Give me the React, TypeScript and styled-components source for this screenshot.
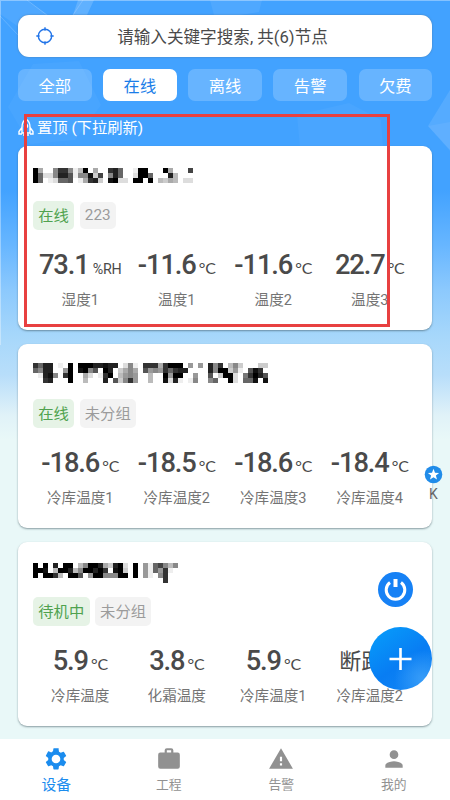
import React from "react";
import styled, { createGlobalStyle } from "styled-components";

const GlobalStyle = createGlobalStyle`
  * { box-sizing: border-box; }
  body {
    margin: 0;
    font-family: Roboto, "Noto Sans CJK SC", sans-serif;
    color: #4a4a4a;
  }
`;

const Screen = styled.div`
  position: relative;
  display: flex;
  flex-direction: column;
  width: 450px;
  height: 800px;
  overflow: hidden;
  background: linear-gradient(#42a2ff 0, #42a2ff 190px, #67b6ff 245px, #8cc9fd 290px, #a6d7fb 335px, #b8defa 375px, #e0f2f8 415px, #e9f8f8 440px, #e9f8f8 100%);
`;

const Backdrop = styled.svg`
  position: absolute;
  left: 0;
  top: 0;
`;

const Content = styled.main`
  position: relative;
  flex: 1;
  min-height: 0;
  padding: 15px 18px 0;
  display: flex;
  flex-direction: column;
`;

const SearchBar = styled.div`
  flex: none;
  height: 42px;
  display: grid;
  grid-template-columns: 52px 1fr 57px;
  align-items: center;
  background: #fff;
  border-radius: 11px;
  box-shadow: 0 0 2px #4d7ca8;
  font-size: 16.6px;
  line-height: 24px;
  text-align: center;
  svg { margin-left: 17.5px; margin-top: -1px; }
  span { padding-top: 4px; white-space: nowrap; }
`;

const Filters = styled.div`
  flex: none;
  display: flex;
  gap: 11.6px;
  margin-top: 12px;
`;

const Chip = styled.button<{ $active?: boolean }>`
  flex: 1;
  height: 32px;
  padding: 4px 0 0;
  border: 0;
  border-radius: 7px;
  background: ${(p) => (p.$active ? "#fff" : "rgba(255,255,255,.2)")};
  color: ${(p) => (p.$active ? "#1a7de8" : "#fff")};
  font: 16.3px/24px Roboto, "Noto Sans CJK SC", sans-serif;
`;

const Pinned = styled.div`
  flex: none;
  height: 45px;
  display: flex;
  align-items: center;
  gap: 3px;
  padding-top: 8px;
  color: #fff;
  font-size: 15.3px;
  line-height: 22px;
`;

const Cards = styled.div`
  display: grid;
  gap: 14px;
`;

const Card = styled.section`
  height: 184px;
  display: flex;
  flex-direction: column;
  padding: 17px 14px 0 14px;
  background: #fff;
  border-radius: 9px;
  box-shadow: 0 1px 2px rgba(55, 80, 90, 0.55);
`;

const Mosaic = styled.svg`
  flex: none;
  display: block;
  margin-left: 1px;
`;

const Tags = styled.div<{ $top: number }>`
  display: flex;
  gap: 5.3px;
  margin: ${(p) => p.$top}px 0 0 1px;
`;

const Tag = styled.span<{ $green?: boolean; $latin?: boolean }>`
  height: ${(p) => (p.$latin ? 27 : 29)}px;
  margin-top: ${(p) => (p.$latin ? 1 : 0)}px;
  padding: ${(p) => (p.$latin ? 2 : 4)}px 5.3px 0;
  border-radius: 5px;
  font-size: 15.3px;
  line-height: 23px;
  background: ${(p) => (p.$green ? "#e6f3e6" : "#f3f3f3")};
  color: ${(p) => (p.$green ? "#4fa24e" : "#9b9b9b")};
`;

const Readings = styled.div`
  display: grid;
  grid-template-columns: repeat(4, 1fr);
  margin-top: 17px;
`;

const Reading = styled.div`
  display: flex;
  flex-direction: column;
  align-items: center;
`;

const Value = styled.div`
  height: 36px;
  display: flex;
  align-items: baseline;
  gap: 3px;
  white-space: nowrap;
  line-height: 36px;
`;

const Amount = styled.b`
  font-size: 27.3px;
  font-weight: 500;
  letter-spacing: -1.1px;
`;

const Unit = styled.span<{ $humidity?: boolean }>`
  font-family: ${(p) => (p.$humidity ? "Roboto" : "Lato")}, sans-serif;
  font-size: ${(p) => (p.$humidity ? 14.3 : 16)}px;
  font-weight: 400;
  margin-left: ${(p) => (p.$humidity ? 1 : 0)}px;
  letter-spacing: -0.2px;
`;

const Fault = styled.span`
  padding: 1px 17px 0 0;
  font-size: 22px;
`;

const Label = styled.div`
  margin-top: 6px;
  font-size: 14.6px;
  line-height: 22px;
  color: #747474;
  white-space: nowrap;
`;

const Navigation = styled.nav`
  position: relative;
  flex: none;
  height: 61px;
  display: grid;
  grid-template-columns: repeat(4, 1fr);
  background: #fff;
`;

const NavItem = styled.div<{ $active?: boolean }>`
  display: flex;
  flex-direction: column;
  align-items: center;
  padding-top: 7px;
  color: ${(p) => (p.$active ? "#1b8cee" : "#919191")};
  font-size: ${(p) => (p.$active ? 14.8 : 12.8)}px;
  line-height: 24px;
  svg { display: block; flex: none; }
  span { margin-top: 1px; }
`;

const Highlight = styled.div`
  position: absolute;
  left: 24px;
  top: 114px;
  width: 366px;
  height: 213px;
  border: 3px solid #e84040;
`;

const IndexMark = styled.div`
  position: absolute;
  left: 424px;
  top: 465px;
  width: 19px;
  display: flex;
  flex-direction: column;
  align-items: center;
  font-size: 14px;
  line-height: 20px;
  color: #666;
`;

const PowerButton = styled.div`
  position: absolute;
  left: 378px;
  top: 572px;
  width: 35px;
  height: 35px;
  border-radius: 50%;
  background: #1681f5;
  svg { display: block; }
`;

const AddButton = styled.div`
  position: absolute;
  left: 369px;
  top: 627px;
  width: 63px;
  height: 63px;
  border-radius: 50%;
  background: radial-gradient(circle at 85% 82%, #379cf8 0, rgba(34,143,247,0) 38%), linear-gradient(145deg, #0799fa 10%, #087df3 55%, #1587f5);
  svg { display: block; }
`;

type Device = {
  mosaic: string[];
  mosaicTop: number;
  mosaicHeight: number;
  tagsTop: number;
  status: string;
  group: string;
  readings: [string, string, string][];
};

const devices: Device[] = [
  {
    mosaic: [
      "0aff8338eb0faff326ffe00fff0afff4",
      "06dd8225e881c4f826ffd006fff2bfff",
      "06fed665fea32cf10ddf00f0fbcabfdd",
    ],
    mosaicTop: 5,
    mosaicHeight: 25,
    tagsTop: 13,
    status: "在线",
    group: "223",
    readings: [["73.1", "%RH", "湿度1"], ["-11.6", "°C", "温度1"], ["-11.6", "°C", "温度2"], ["22.7", "°C", "温度3"]],
  },
  {
    mosaic: [
      "3622fef0f00022122fd8ef333a3000f9f9f283fb8cfffcc",
      "6822ff90f1085f02fca8af598936322ffff2800c9ef513f",
      "fe218f30ffadfe30fb989ffbff0900ff9ff5fc00df73025",
      "ff32fff0ffbfff2f5c839ffbff1d2efe8ff86ff0df661f1",
    ],
    mosaicTop: 2,
    mosaicHeight: 30,
    tagsTop: 8,
    status: "在线",
    group: "未分组",
    readings: [["-18.6", "°C", "冷库温度1"], ["-18.5", "°C", "冷库温度2"], ["-18.6", "°C", "冷库温度3"], ["-18.4", "°C", "冷库温度4"]],
  },
  {
    mosaic: [
      "0f0f2f00fb8002ac20df0f9e648b8",
      "001fb002b800203f10cf0f9e693ef",
      "0f003bf005f90088800f0f9ef83ff",
      "ffffffffffffffffffffffffff3ff",
    ],
    mosaicTop: 4,
    mosaicHeight: 30,
    tagsTop: 8,
    status: "待机中",
    group: "未分组",
    readings: [["5.9", "°C", "冷库温度"], ["3.8", "°C", "化霜温度"], ["5.9", "°C", "冷库温度1"], ["断路", "", "冷库温度2"]],
  },
];

function PixelName({ rows, top, height }: { rows: string[]; top: number; height: number }) {
  return (
    <Mosaic width={235} height={height} shapeRendering="crispEdges">
      {rows.flatMap((row, y) =>
        [...row].map((tone, x) =>
          tone === "f" ? null : (
            <rect key={`${x}-${y}`} x={x * 5} y={top + y * 5} width="5" height="5" fill={`#${tone.repeat(3)}`} />
          ),
        ),
      )}
    </Mosaic>
  );
}

const navItems = [
  {
    name: "设备",
    d: "M19.14 12.94c.04-.3.06-.61.06-.94s-.02-.64-.07-.94l2.03-1.58a.49.49 0 0 0 .12-.61l-1.92-3.32a.49.49 0 0 0-.59-.22l-2.39.96a7 7 0 0 0-1.62-.94l-.36-2.54A.48.48 0 0 0 13.92 2h-3.84a.48.48 0 0 0-.47.41l-.36 2.54c-.59.24-1.13.57-1.62.94l-2.39-.96a.49.49 0 0 0-.59.22L2.74 8.87a.48.48 0 0 0 .12.61l2.03 1.58a6 6 0 0 0-.02 1.88l-2.03 1.58a.49.49 0 0 0-.12.61l1.92 3.32c.12.22.37.29.59.22l2.39-.96c.5.38 1.03.7 1.62.94l.36 2.54c.05.24.24.41.48.41h3.84c.24 0 .44-.17.47-.41l.36-2.54a7 7 0 0 0 1.62-.94l2.39.96c.22.08.47 0 .59-.22l1.92-3.32a.48.48 0 0 0-.12-.61zM12 16a4 4 0 1 1 0-8 4 4 0 0 1 0 8z",
  },
  { name: "工程", d: "M20 6h-4V4a2 2 0 0 0-2-2h-4a2 2 0 0 0-2 2v2H4a2 2 0 0 0-2 2v11a2 2 0 0 0 2 2h16a2 2 0 0 0 2-2V8a2 2 0 0 0-2-2zm-6 0h-4V4h4z" },
  { name: "告警", d: "M1 21h22L12 2zm12-3h-2v-2h2zm0-4h-2v-4h2z" },
  { name: "我的", d: "M12 12a4 4 0 1 0 0-8 4 4 0 0 0 0 8zm0 2c-2.67 0-8 1.34-8 4v2h16v-2c0-2.66-5.33-4-8-4z" },
];

export default function App() {
  return (
    <Screen>
      <GlobalStyle />
      <Backdrop width="450" height="345" fill="#fff">
        <path d="M0 0h27l24 17-19 19L0 14z" opacity=".07" />
        <path d="M0 16l18 19M27 0l25 19M73 15L83 0" stroke="#fff" fill="none" opacity=".18" />
        <path d="M78 0h16l-7 15H73z" opacity=".16" />
        <path d="M210 0h52l-3 12-44 7z" opacity=".07" />
        <path d="M8 107l25-43 46-3 22 44-26 35-45 4z" opacity=".035" />
        <path d="M297 115l52-12 32 17 2 28h-83z" opacity=".04" />
        <path d="M428 126l22-36v60z" opacity=".1" />
        <path d="M428 126l22-4v29z" opacity=".06" />
        <path d="M0 0h1v345H0zM0 0h450v1H0z" opacity=".35" />
      </Backdrop>
      <Content>
        <SearchBar>
          <svg width="18" height="18" fill="none" stroke="#2375e8" strokeWidth="1.4">
            <circle cx="9" cy="9" r="6.7" />
            <path d="M9 .3v3.4M9 14.3v3.4M.3 9h3.4M14.3 9h3.4" />
          </svg>
          <span>请输入关键字搜索, 共(6)节点</span>
        </SearchBar>
        <Filters>
          {["全部", "在线", "离线", "告警", "欠费"].map((name) => (
            <Chip key={name} $active={name === "在线"}>{name}</Chip>
          ))}
        </Filters>
        <Pinned>
          <svg width="16" height="20" viewBox="0 0 16 20" fill="none" stroke="#fff" strokeWidth="1.4">
            <path d="M8 1C5 3 4 6 4 9v6h8V9c0-3-1-6-4-8zM4 9.5l-3 4V16h3M12 9.5l3 4V16h-3M6 16v2M10 16v2M8 16v3.5" />
            <circle cx="8" cy="8" r="1.6" />
          </svg>
          置顶 (下拉刷新)
        </Pinned>
        <Cards>
          {devices.map((device, i) => (
            <Card key={i}>
              <PixelName rows={device.mosaic} top={device.mosaicTop} height={device.mosaicHeight} />
              <Tags $top={device.tagsTop}>
                <Tag $green>{device.status}</Tag>
                <Tag $latin={device.group === "223"}>{device.group}</Tag>
              </Tags>
              <Readings>
                {device.readings.map(([value, unit, label]) => (
                  <Reading key={label}>
                    <Value>
                      {unit ? <><Amount>{value}</Amount><Unit $humidity={unit === "%RH"}>{unit}</Unit></> : <Fault>{value}</Fault>}
                    </Value>
                    <Label>{label}</Label>
                  </Reading>
                ))}
              </Readings>
            </Card>
          ))}
        </Cards>
      </Content>
      <Navigation>
        {navItems.map((item, i) => (
          <NavItem key={item.name} $active={i === 0}>
            <svg width="26" height="26" viewBox="0 0 24 24" fill="currentColor"><path d={item.d} /></svg>
            <span>{item.name}</span>
          </NavItem>
        ))}
      </Navigation>
      <Highlight />
      <IndexMark>
        <svg width="19" height="19" viewBox="0 0 19 19">
          <circle cx="9.5" cy="9.5" r="8.8" fill="#218ce9" />
          <path d="M9.5 3.8l1.5 3.9 4.1.2-3.2 2.6 1.1 4-3.5-2.2L6 14.5l1.1-4-3.2-2.6 4.1-.2z" fill="#fff" />
        </svg>
        K
      </IndexMark>
      <PowerButton>
        <svg width="35" height="35" fill="none" stroke="#fff">
          <path d="M12 10.5a9.3 9.3 0 1 0 11 0" strokeWidth="3" />
          <path d="M17.5 7v8" strokeWidth="4" />
        </svg>
      </PowerButton>
      <AddButton>
        <svg width="63" height="63" stroke="#fff" strokeWidth="2.6"><path d="M31.5 21v22M20.5 32h22" /></svg>
      </AddButton>
    </Screen>
  );
}
